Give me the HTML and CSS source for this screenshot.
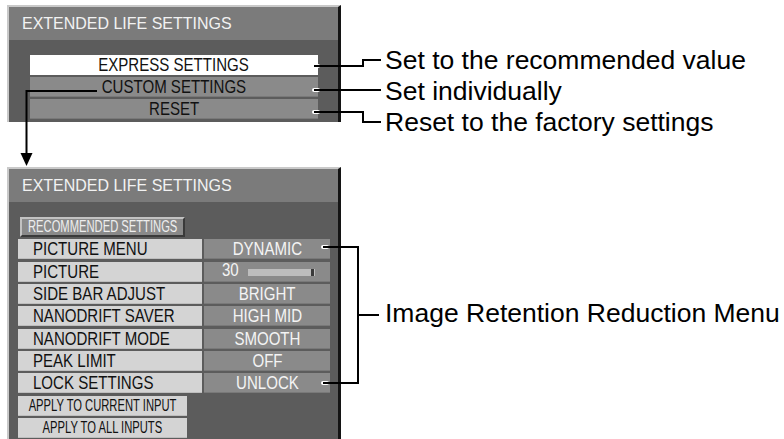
FILE: index.html
```html
<!DOCTYPE html>
<html>
<head>
<meta charset="utf-8">
<link rel="stylesheet" href="styles.css">
</head>
<body>
<div class="page">
  <div class="menus">
    <div class="panel panel-top">
      <div class="title"><span class="title-text">EXTENDED LIFE SETTINGS</span></div>
      <div class="body">
        <div class="opt opt-active"><span class="sq">EXPRESS SETTINGS</span></div>
        <div class="opt"><span class="sq">CUSTOM SETTINGS</span></div>
        <div class="opt"><span class="sq">RESET</span></div>
      </div>
    </div>
    <div class="panel panel-bottom">
      <div class="title"><span class="title-text">EXTENDED LIFE SETTINGS</span></div>
      <div class="body list">
        <div class="btn btn-dark"><span class="narrow">RECOMMENDED SETTINGS</span></div>
        <div class="row"><div class="label"><span class="sq sq-left">PICTURE MENU</span></div><div class="value"><span class="sq">DYNAMIC</span></div></div>
        <div class="row"><div class="label"><span class="sq sq-left">PICTURE</span></div><div class="value value-bar"><span class="num"><span class="sq sq-left">30</span></span><span class="bar"><span class="knob"></span></span></div></div>
        <div class="row"><div class="label"><span class="sq sq-left">SIDE BAR ADJUST</span></div><div class="value"><span class="sq">BRIGHT</span></div></div>
        <div class="row"><div class="label"><span class="sq sq-left">NANODRIFT SAVER</span></div><div class="value"><span class="sq">HIGH MID</span></div></div>
        <div class="row"><div class="label"><span class="sq sq-left">NANODRIFT MODE</span></div><div class="value"><span class="sq">SMOOTH</span></div></div>
        <div class="row"><div class="label"><span class="sq sq-left">PEAK LIMIT</span></div><div class="value"><span class="sq">OFF</span></div></div>
        <div class="row"><div class="label"><span class="sq sq-left">LOCK SETTINGS</span></div><div class="value"><span class="sq">UNLOCK</span></div></div>
        <div class="btn btn-light"><span class="narrow">APPLY TO CURRENT INPUT</span></div>
        <div class="btn btn-light"><span class="narrow">APPLY TO ALL INPUTS</span></div>
      </div>
    </div>
  </div>
  <div class="notes">
    <div class="note-group group-top">
      <div class="note">Set to the recommended value</div>
      <div class="note">Set individually</div>
      <div class="note">Reset to the factory settings</div>
    </div>
    <div class="note-group group-bottom">
      <div class="note">Image Retention Reduction Menu</div>
    </div>
  </div>
</div>
<svg class="leaders" width="784" height="439" viewBox="0 0 784 439">
  <g fill="none" stroke="#fff" stroke-width="4" stroke-linecap="round">
    <path d="M314 66 H318"/>
    <path d="M314 90 H318"/>
    <path d="M314 112 H318"/>
    <path d="M323 247 H327"/>
    <path d="M323 383 H327"/>
  </g>
  <g fill="none" stroke="#000" stroke-width="2">
    <path d="M314 66 H363 V60 H381"/>
    <path d="M314 90 H381"/>
    <path d="M314 112 H363 V122 H381"/>
    <path d="M97 91 H26.5 V156"/>
    <path d="M323 247 H358 V383 H323"/>
    <path d="M358 315 H379"/>
  </g>
  <polygon points="20.5,153 32.5,153 26.5,166" fill="#000"/>
</svg>
</body>
</html>
```
FILE: styles.css
```css
html, body {
  margin: 0;
  padding: 0;
  background: #ffffff;
}

body {
  width: 784px;
  height: 439px;
  overflow: hidden;
  position: relative;
  font-family: "Liberation Sans", Arial, sans-serif;
}

.page {
  display: flex;
  padding: 5px 0 0 7px;
}

.menus {
  width: 334px;
  display: flex;
  flex-direction: column;
  gap: 45px;
}

.panel {
  box-sizing: border-box;
  background: #5c5c5c;
  border-top: 2px solid #c9c9c9;
  border-left: 2px solid #c9c9c9;
  border-right: 3px solid #141414;
  overflow: hidden;
}

.panel-top {
  height: 117px;
}

.panel-bottom {
  height: 280px;
}

.title {
  height: 33px;
  background: #7b7b7b;
  color: #f2f2f2;
  font-size: 17px;
  line-height: 33px;
  padding-left: 13px;
  white-space: nowrap;
}

.title-text {
  display: inline-block;
  transform: scaleX(0.94);
  transform-origin: left center;
}

.sq {
  display: inline-block;
  flex: none;
  white-space: nowrap;
  transform: scaleX(0.86);
  transform-origin: center;
}

.sq-left {
  transform-origin: left center;
}

.panel-top .body {
  padding: 15px 0 0 21px;
  display: flex;
  flex-direction: column;
  gap: 2px;
}

.opt {
  width: 288px;
  height: 20px;
  display: flex;
  justify-content: center;
  background: #8a8a8a;
  color: #111;
  font-size: 17.5px;
  line-height: 21px;
  box-shadow: inset 0 -1px 0 rgba(0, 0, 0, 0.12);
}

.opt-active {
  background: #ffffff;
  box-shadow: none;
}

.list {
  padding: 15px 0 0 9px;
  display: flex;
  flex-direction: column;
  gap: 2.33px;
}

.row {
  display: flex;
  gap: 2px;
  height: 20px;
}

.label {
  width: 184px;
  display: flex;
  background: #d4d4d4;
  color: #111;
  font-size: 17.5px;
  line-height: 21px;
  padding-left: 15px;
  box-sizing: border-box;
  box-shadow: inset 0 -1px 0 rgba(0, 0, 0, 0.1);
}

.value {
  width: 126px;
  display: flex;
  justify-content: center;
  background: #8a8a8a;
  color: #f4f4f4;
  font-size: 17.5px;
  line-height: 21px;
  box-shadow: inset 0 -1px 0 rgba(0, 0, 0, 0.12);
}

.value-bar {
  justify-content: flex-start;
  align-items: center;
  padding-left: 18px;
  box-sizing: border-box;
}

.num {
  width: 26px;
  line-height: 19px;
  margin-top: -2px;
}

.bar {
  width: 67px;
  height: 7px;
  margin-top: 1px;
  background: #bdbdbd;
  display: flex;
  justify-content: flex-end;
}

.knob {
  width: 3px;
  height: 7px;
  margin-right: 1px;
  background: #3a3a3a;
}

.btn {
  height: 20px;
  box-sizing: border-box;
  display: flex;
  justify-content: center;
  font-size: 16px;
  white-space: nowrap;
}

.btn-dark {
  width: 165px;
  margin-left: 2px;
  background: #8a8a8a;
  color: #eeeeee;
  border-top: 2px solid #c2c2c2;
  border-left: 2px solid #c2c2c2;
  border-right: 2px solid #3a3a3a;
  border-bottom: 2px solid #3a3a3a;
  line-height: 16px;
}

.btn-light {
  width: 169px;
  background: #d4d4d4;
  color: #111;
  box-shadow: inset 0 -1px 0 rgba(0, 0, 0, 0.1);
  line-height: 20px;
}

.narrow {
  display: inline-block;
  flex: none;
  transform: scaleX(0.7);
  transform-origin: center;
}

.notes {
  padding-left: 44px;
  padding-top: 40px;
  color: #000;
  font-size: 26.5px;
  line-height: 31px;
  white-space: nowrap;
}

.group-bottom {
  margin-top: 160px;
}

.leaders {
  position: absolute;
  left: 0;
  top: 0;
}
```
